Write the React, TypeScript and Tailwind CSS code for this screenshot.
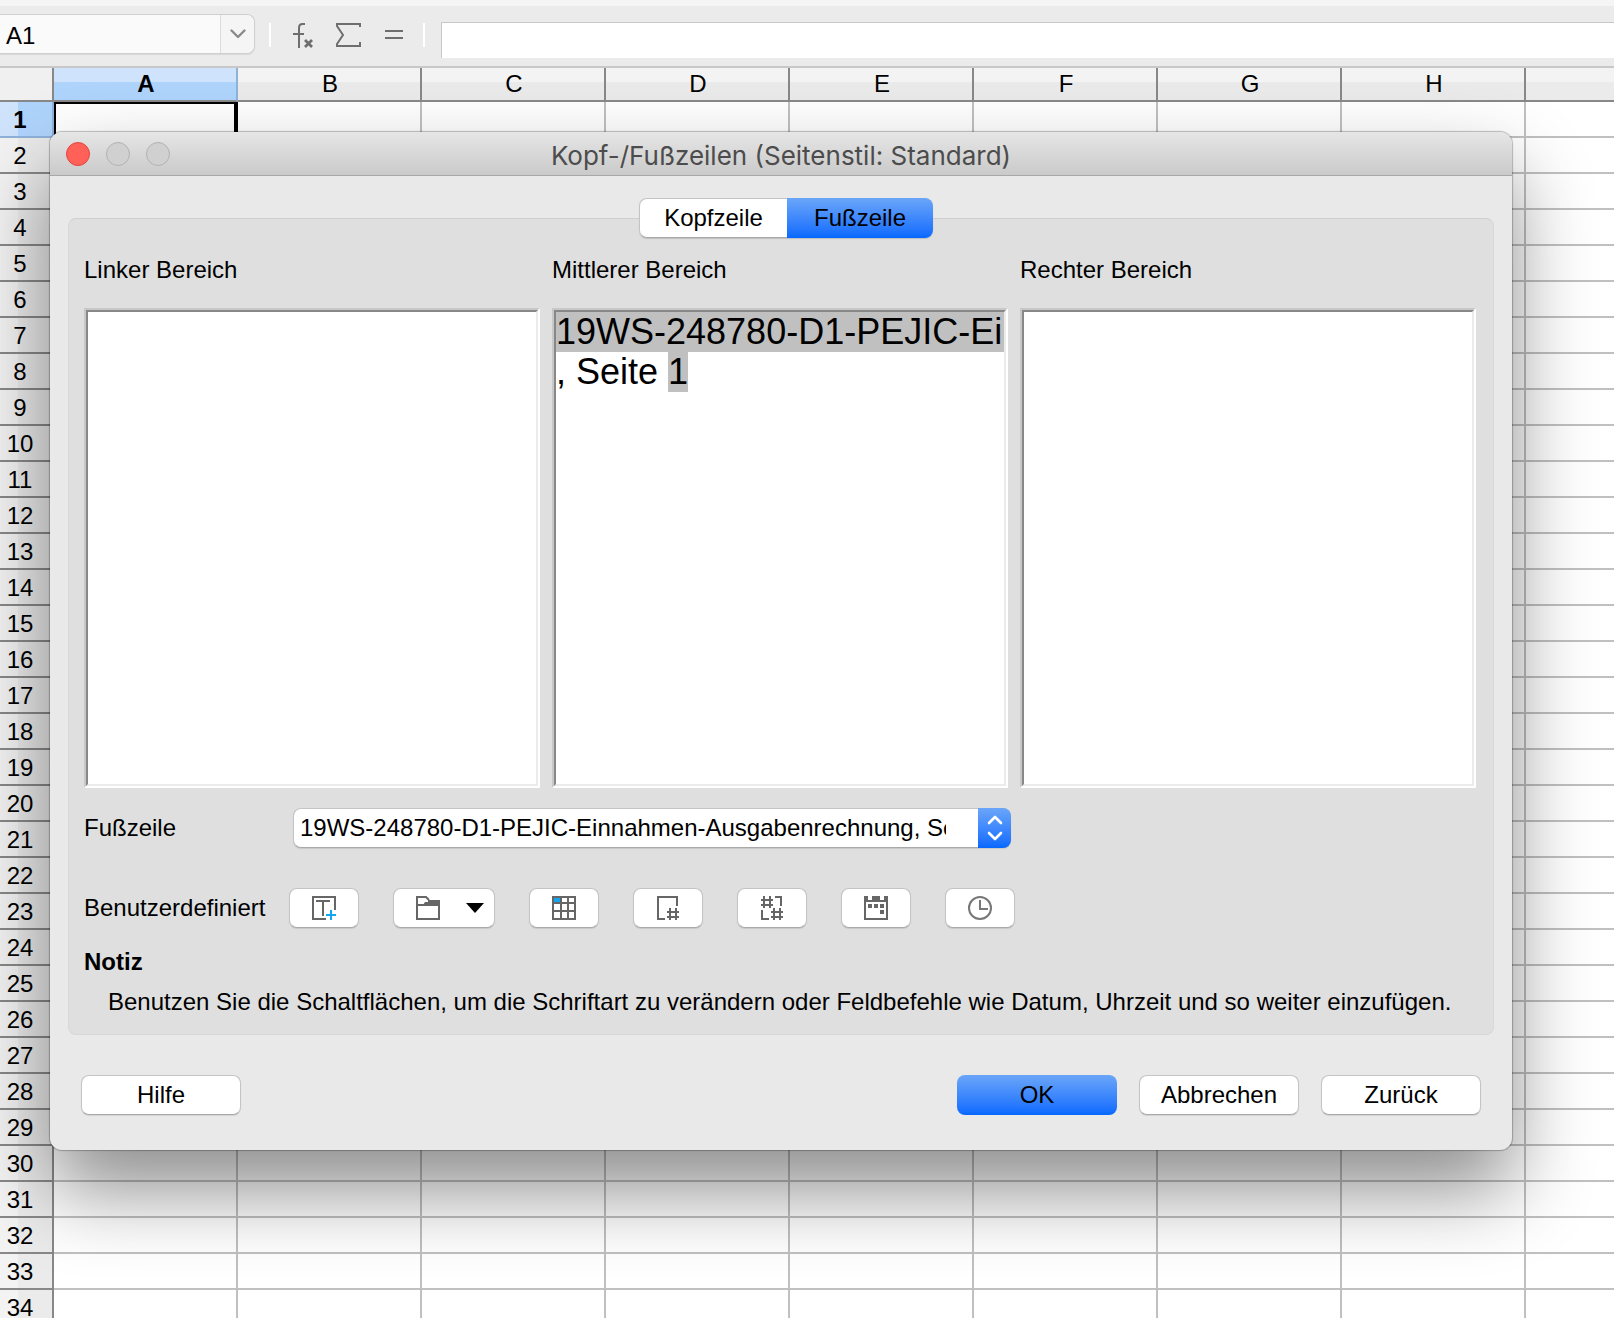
import type { ReactNode } from "react";

const COLUMNS = ["A", "B", "C", "D", "E", "F", "G", "H"];
const ROWS = Array.from({ length: 34 }, (_, i) => i + 1);
const FOOTER = "19WS-248780-D1-PEJIC-Einnahmen-Ausgabenrechnung, Seite 1";

const BUTTON =
  "flex h-10 items-center justify-center rounded-lg border border-[#c4c4c4] border-b-[#a9a9a9] bg-white shadow-[0_1px_1px_rgba(0,0,0,0.1)]";
const BLUE = "bg-linear-to-b from-[#6aa5f8] to-[#0468ff]";
const BOX =
  "border-2 border-t-[#c8c8c8] border-l-[#c8c8c8] border-r-white border-b-white";
const BOX_INNER =
  "block h-full w-full resize-none border-2 border-t-[#888] border-l-[#888] border-r-[#ebebeb] border-b-[#ebebeb] bg-white text-4xl leading-10 outline-none";

type Tool = { label: string; icon: ReactNode; menu?: boolean };

const TOOLS: Tool[] = [
  {
    label: "Textattribute",
    icon: (
      <svg viewBox="0 0 24 24" fill="none" stroke="#666" strokeWidth="2" className="size-6">
        <path d="M14 23H1V1h22v13M4 5h14M11 5v15" />
        <path d="M19 14v10M14 19h10" stroke="#14a5f0" />
      </svg>
    ),
  },
  {
    label: "Dateiname",
    menu: true,
    icon: (
      <svg viewBox="0 0 24 24" fill="none" stroke="#666" strokeWidth="2" className="size-6">
        <path d="M1 9V1h9l3 3M1 9h22v14H1Z" />
        <path d="M12 4h12v5H7l2-3h3Z" fill="#666" stroke="none" />
      </svg>
    ),
  },
  {
    label: "Tabellenname",
    icon: (
      <svg viewBox="0 0 24 24" fill="none" stroke="#666" strokeWidth="2" className="size-6">
        <path d="M2 2h7v5H2z" fill="#14a5f0" stroke="none" />
        <path d="M1 1h22v22H1ZM1 7h22M1 15h22M9 1v22M16 1v22" />
      </svg>
    ),
  },
  {
    label: "Seite",
    icon: (
      <svg viewBox="0 0 24 24" fill="none" stroke="#666" strokeWidth="2" className="size-6">
        <path d="M9 23H2V1h19v9M11 16h12M11 21h12M14 12v12M20 12v12" />
      </svg>
    ),
  },
  {
    label: "Seiten",
    icon: (
      <svg viewBox="0 0 24 24" fill="none" stroke="#666" strokeWidth="2" className="size-6">
        <path d="M1 4h12M1 9h12M4 0v12M10 0v12M15 1h6v9M2 14v9h7M11 16h12M11 21h12M14 12v12M20 12v12" />
      </svg>
    ),
  },
  {
    label: "Datum",
    icon: (
      <svg viewBox="0 0 24 24" fill="#666" className="size-6">
        <path d="M0 0h4v4h4V0h8v4h4V0h4v24H0ZM2 6v16h20V6Z" fillRule="evenodd" />
        <path d="M4 8h4v4H4zM10 8h4v4h-4zM16 8h4v4h-4zM16 14h4v4h-4z" />
      </svg>
    ),
  },
  {
    label: "Uhrzeit",
    icon: (
      <svg viewBox="0 0 24 24" fill="none" stroke="#777" strokeWidth="2" className="size-6">
        <circle cx="12" cy="12" r="11" />
        <path d="M12 4v9h8" />
      </svg>
    ),
  },
];

function FormulaBar() {
  return (
    <header className="border-b-2 border-[#c8c8c8] bg-[#ebebeb]">
      <div className="h-1.5 bg-[#f5f5f5]" />
      <div className="flex h-15 items-start pt-2">
        <div className="flex h-10 w-[255px] shrink-0 rounded-r-lg border border-l-0 border-[#cfcfcf] bg-[#fafafa] shadow-[0_1px_1px_rgba(0,0,0,0.08)]">
          <input
            aria-label="Namenfeld"
            defaultValue="A1"
            className="w-55 bg-transparent pt-1 pl-1.5 outline-none"
          />
          <button
            aria-label="Namen auswählen"
            className="flex flex-1 items-center justify-center rounded-r-lg border-l border-[#dcdcdc] bg-[#f5f5f5]"
          >
            <svg viewBox="0 0 16 10" fill="none" stroke="#8a8a8a" strokeWidth="2.4" strokeLinecap="round" strokeLinejoin="round" className="h-2.5 w-4">
              <path d="M1.5 1.5 8 8l6.500-6.500" />
            </svg>
          </button>
        </div>
        <div className="ml-3.5 flex h-10 items-center pt-0.5">
          <div className="h-6 w-0.5 bg-white" />
          <button aria-label="Funktionsassistent" className="ml-5">
            <svg viewBox="0 0 24 26" fill="none" stroke="#6e6e6e" strokeWidth="2" className="h-6.5 w-6">
              <path d="M14 2h-2.500Q8 2 8 6v20M2 12h11" />
              <path d="m14 18 7 7M21 18l-7 7" strokeWidth="2.800" />
            </svg>
          </button>
          <button aria-label="Summe" className="ml-5">
            <svg viewBox="0 0 26 26" fill="none" stroke="#6e6e6e" strokeWidth="2" className="size-6.5">
              <path d="M25 5V2H2v2l6 9-6 9v2h23v-4" />
            </svg>
          </button>
          <button aria-label="Formel" className="ml-6">
            <svg viewBox="0 0 18 10" fill="none" stroke="#6e6e6e" strokeWidth="2" className="h-2.5 w-4.5">
              <path d="M0 1h18M0 8h18" />
            </svg>
          </button>
          <div className="ml-5 h-6 w-0.5 bg-white" />
        </div>
        <input
          aria-label="Eingabezeile"
          className="mt-2 ml-4 h-9 min-w-0 flex-1 border-t border-l border-[#c8c8c8] bg-white px-2 outline-none"
        />
      </div>
    </header>
  );
}

function Sheet() {
  return (
    <table className="w-full table-fixed border-separate border-spacing-0">
      <colgroup>
        <col className="w-[54px]" />
        {COLUMNS.map((c) => (
          <col key={c} className="w-46" />
        ))}
        <col />
      </colgroup>
      <thead>
        <tr className="h-[34px]">
          <td className="border-r-2 border-b-2 border-[#888] bg-[#f0f0f0]" />
          {COLUMNS.map((c) => (
            <th
              key={c}
              scope="col"
              className={`border-r-2 border-b-2 p-0 pl-0.5 leading-8 ${
                c === "A"
                  ? "border-r-[#8fb2da] border-b-[#888] bg-linear-to-b from-[#cfe4fc] from-45% to-[#afd4fc] to-45% font-bold"
                  : "border-[#888] bg-linear-to-b from-[#f3f3f3] from-45% to-[#eaeaea] to-45% font-normal"
              }`}
            >
              {c}
            </th>
          ))}
          <td className="border-b-2 border-[#888] bg-linear-to-b from-[#f3f3f3] from-45% to-[#ebebeb] to-45%" />
        </tr>
      </thead>
      <tbody>
        {ROWS.map((row) => (
          <tr key={row} className="h-9">
            <th
              scope="row"
              className={`border-r-2 border-b-2 p-0 pt-0.5 pr-3 leading-8 ${
                row === 1
                  ? "border-[#8fb2da] bg-linear-to-r from-[#cfe4fc] from-35% to-[#afd4fc] to-35% font-bold"
                  : "border-[#888] bg-linear-to-r from-[#f3f3f3] from-35% to-[#ebebeb] to-35% font-normal"
              }`}
            >
              {row}
            </th>
            {COLUMNS.map((c) => (
              <td
                key={c}
                className={
                  row === 1 && c === "A"
                    ? "border-2 border-r-4 border-black"
                    : "border-r-2 border-b-2 border-[#c0c0c0]"
                }
              />
            ))}
            <td className="border-b-2 border-[#c0c0c0]" />
          </tr>
        ))}
      </tbody>
    </table>
  );
}

function TitleBar() {
  return (
    <div className="relative flex h-11 items-center gap-4 rounded-t-xl border-b border-[#a8a8a8] bg-linear-to-b from-[#e6e6e6] to-[#cacaca] px-4">
      <button aria-label="Schließen" className="size-6 rounded-full border border-[#e2463f] bg-[#ff6058]" />
      <button aria-label="Minimieren" disabled className="size-6 rounded-full border border-[#b2b2b2] bg-[#d0d0d0]" />
      <button aria-label="Maximieren" disabled className="size-6 rounded-full border border-[#b2b2b2] bg-[#d0d0d0]" />
      <h1
        id="dialog-title"
        className="pointer-events-none absolute inset-x-0 top-1 text-center font-['Inter',sans-serif] text-[26px] leading-10 text-[#4c4c4c]"
      >
        Kopf-/Fußzeilen (Seitenstil: Standard)
      </h1>
    </div>
  );
}

function HeaderFooterDialog() {
  return (
    <div
      role="dialog"
      aria-labelledby="dialog-title"
      className="absolute top-[132px] right-[102px] left-[50px] rounded-xl bg-[#e9e9e9] pb-[35px] shadow-[0_0_1px_1px_rgba(0,0,0,0.25),0_40px_80px_rgba(0,0,0,0.45)]"
    >
      <TitleBar />
      <div className="px-4.5 pt-5.5">
        <div className="relative z-10 flex justify-center pl-2.5">
          <div role="tablist" className="flex h-10 rounded-lg shadow-[0_1px_1px_rgba(0,0,0,0.15)]">
            <button
              role="tab"
              aria-selected="false"
              className="w-37 rounded-l-lg border border-r-0 border-[#c4c4c4] border-b-[#a9a9a9] bg-white px-4"
            >
              Kopfzeile
            </button>
            <button role="tab" aria-selected="true" className={`w-36.5 rounded-r-lg ${BLUE}`}>
              Fußzeile
            </button>
          </div>
        </div>

        <section className="-mt-5 rounded-lg border border-[#d8d8d8] border-t-[#cfcfcf] bg-[#dfdfdf] pt-[33px] pr-[17px] pb-3 pl-[15px]">
          <div className="grid grid-cols-3 gap-3">
            <div>
              <label htmlFor="left-area" className="mb-5 block leading-9">
                Linker Bereich
              </label>
              <div className={`h-120 ${BOX}`}>
                <textarea id="left-area" className={BOX_INNER} />
              </div>
            </div>
            <div>
              <div id="center-label" className="mb-5 leading-9">
                Mittlerer Bereich
              </div>
              <div className={`h-120 ${BOX}`}>
                <div
                  role="textbox"
                  aria-labelledby="center-label"
                  aria-multiline="true"
                  contentEditable
                  suppressContentEditableWarning
                  spellCheck={false}
                  className={`${BOX_INNER} overflow-hidden whitespace-nowrap`}
                >
                  <div className="bg-[#c0c0c0]">19WS-248780-D1-PEJIC-Ei</div>
                  <div>
                    , Seite <span className="inline-block bg-[#c0c0c0]">1</span>
                  </div>
                </div>
              </div>
            </div>
            <div>
              <label htmlFor="right-area" className="mb-5 block leading-9">
                Rechter Bereich
              </label>
              <div className={`h-120 ${BOX}`}>
                <textarea id="right-area" className={BOX_INNER} />
              </div>
            </div>
          </div>

          <div className="mt-5 flex items-center">
            <label htmlFor="footer" className="w-[209px]">
              Fußzeile
            </label>
            <div className="relative w-[718px]">
              <select
                id="footer"
                className="h-10 w-full appearance-none rounded-lg border border-[#c4c4c4] border-b-[#a9a9a9] bg-white pr-16 pl-1.5 shadow-[0_1px_1px_rgba(0,0,0,0.1)] outline-none"
              >
                <option>{FOOTER}</option>
              </select>
              <span
                className={`pointer-events-none absolute inset-y-0 right-0 flex w-[33px] items-center justify-center rounded-r-lg ${BLUE}`}
              >
                <svg viewBox="0 0 16 26" fill="none" stroke="#fff" strokeWidth="2.600" strokeLinecap="round" strokeLinejoin="round" className="h-6.5 w-4">
                  <path d="m2 8 6-6 6 6M2 18l6 6 6-6" />
                </svg>
              </span>
            </div>
          </div>

          <div className="mt-10 flex items-center">
            <div className="w-[205px]">Benutzerdefiniert</div>
            <div className="flex gap-8.5">
              {TOOLS.map((tool) => (
                <button
                  key={tool.label}
                  aria-label={tool.label}
                  className={`${BUTTON} ${tool.menu ? "w-[102px] gap-6.5 pl-3" : "w-17.5"}`}
                >
                  {tool.icon}
                  {tool.menu && (
                    <svg viewBox="0 0 18 10" className="h-2.5 w-4.5">
                      <path d="M0 0h18l-9 10Z" />
                    </svg>
                  )}
                </button>
              ))}
            </div>
          </div>

          <h2 className="mt-3.5 leading-10 font-bold">Notiz</h2>
          <p className="pl-6 leading-10">
            Benutzen Sie die Schaltflächen, um die Schriftart zu verändern oder Feldbefehle wie
            Datum, Uhrzeit und so weiter einzufügen.
          </p>
        </section>

        <div className="mt-10 flex gap-5.5 px-[13px]">
          <button className={`${BUTTON} mr-auto w-40`}>Hilfe</button>
          <button className={`h-10 w-40 rounded-lg ${BLUE}`}>OK</button>
          <button className={`${BUTTON} w-40`}>Abbrechen</button>
          <button className={`${BUTTON} w-40`}>Zurück</button>
        </div>
      </div>
    </div>
  );
}

export default function App() {
  return (
    <main className="relative h-screen overflow-hidden bg-white font-['Liberation_Sans',Arial,sans-serif] text-2xl text-black">
      <FormulaBar />
      <Sheet />
      <HeaderFooterDialog />
    </main>
  );
}
